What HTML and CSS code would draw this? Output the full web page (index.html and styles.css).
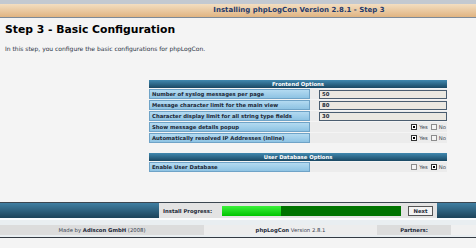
FILE: index.html
```html
<!DOCTYPE html>
<html lang="en">
<head>
    <meta charset="UTF-8">
    <meta name="viewport" content="width=device-width, initial-scale=1.0">
    <title>Installing phpLogCon - Step 3</title>
    <link rel="stylesheet" href="styles.css">
</head>
<body>
    <div class="topbar">
        <div class="topbar-title">Installing phpLogCon Version 2.8.1 - Step 3</div>
    </div>

    <div class="content">
        <h1>Step 3 - Basic Configuration</h1>
        <p class="intro">In this step, you configure the basic configurations for phpLogCon.</p>

        <table class="config">
            <colgroup>
                <col class="col-label">
                <col class="col-value">
            </colgroup>
            <tr>
                <th colspan="2">Frontend Options</th>
            </tr>
            <tr>
                <td class="label">Number of syslog messages per page</td>
                <td class="value"><input type="text" value="50"></td>
            </tr>
            <tr>
                <td class="label">Message character limit for the main view</td>
                <td class="value"><input type="text" value="80"></td>
            </tr>
            <tr>
                <td class="label">Character display limit for all string type fields</td>
                <td class="value"><input type="text" value="30"></td>
            </tr>
            <tr>
                <td class="label">Show message details popup</td>
                <td class="value">
                    <div class="choices">
                        <span class="box checked"></span><span>Yes</span>
                        <span class="box"></span><span>No</span>
                    </div>
                </td>
            </tr>
            <tr>
                <td class="label">Automatically resolved IP Addresses (inline)</td>
                <td class="value">
                    <div class="choices">
                        <span class="box checked"></span><span>Yes</span>
                        <span class="box"></span><span>No</span>
                    </div>
                </td>
            </tr>
            <tr class="spacer">
                <td colspan="2"></td>
            </tr>
            <tr>
                <th colspan="2">User Database Options</th>
            </tr>
            <tr>
                <td class="label">Enable User Database</td>
                <td class="value">
                    <div class="choices">
                        <span class="box"></span><span>Yes</span>
                        <span class="box checked"></span><span>No</span>
                    </div>
                </td>
            </tr>
        </table>
    </div>

    <div class="install-bar">
        <div class="install-panel">
            <div class="install-label">Install Progress:</div>
            <div class="track"><div class="track-done" style="width: 59px"></div></div>
            <button type="button" class="next">Next</button>
        </div>
    </div>

    <div class="footer">
        <div class="footer-row">
            <div class="footer-cell made">Made by <b>Adiscon GmbH</b> (2008)</div>
            <div class="footer-cell version"><b>phpLogCon</b> Version 2.8.1</div>
            <div class="footer-cell partners"><b>Partners:</b></div>
            <div class="footer-cell rest"></div>
        </div>
    </div>
</body>
</html>
```

FILE: styles.css
```css
body {
    margin: 0;
    background-color: #f4f4f4;
    font-family: "DejaVu Sans", Verdana, sans-serif;
    color: #1c2a38;
}

.topbar {
    height: 13px;
    border-top: 4px solid #c3c9d1;
    border-bottom: 1px solid #7d8a98;
    background: linear-gradient(#f3dec1, #e0b482);
}

.topbar-title {
    padding-left: 122px;
    text-align: center;
    font-size: 7px;
    font-weight: bold;
    line-height: 13px;
    color: #1f3a6b;
}

.content {
    padding: 5px 0 0 5px;
}

h1 {
    margin: 0;
    font-size: 10.8px;
    line-height: 13px;
    color: #000;
}

.intro {
    margin: 9px 0 0;
    font-size: 6px;
    line-height: 7px;
    color: #2a3344;
}

.config {
    margin: 27px 0 0 144px;
    width: 298px;
    table-layout: fixed;
    border-collapse: separate;
    border-spacing: 0 1px;
    font-size: 5.3px;
}

.col-label {
    width: 161px;
}

.col-value {
    width: 137px;
}

.config th {
    height: 8px;
    padding: 0;
    background: linear-gradient(#4189b0, #1a4863);
    color: #fff;
    font-weight: bold;
    line-height: 8px;
    text-align: center;
}

.config td {
    height: 10px;
    padding: 0;
    box-sizing: border-box;
}

.label {
    padding-left: 2px !important;
    border: 1px solid #6fa3c7;
    background: linear-gradient(#b3daf1, #8ec3e3);
    font-weight: bold;
    color: #1c2836;
    white-space: nowrap;
}

.value {
    padding-left: 9px !important;
    background-color: #ececec;
}

.value input {
    display: block;
    box-sizing: border-box;
    width: 128px;
    height: 9px;
    margin: 0;
    padding: 0 2px;
    border: 1px solid #4a5d70;
    background-color: #ebe8e1;
    font-family: inherit;
    font-size: 5.3px;
    font-weight: bold;
    color: #1c2836;
}

.choices {
    display: flex;
    justify-content: flex-end;
    align-items: center;
    gap: 2px;
    padding-right: 1px;
    color: #3a4450;
}

.box {
    box-sizing: border-box;
    width: 6px;
    height: 6px;
    margin-left: 1px;
    border: 1px solid #8d8d8d;
    background-color: #f4f4f4;
}

.box.checked {
    border-color: #333;
    background: radial-gradient(#000 45%, #fff 50%);
}

.spacer td {
    height: 8px;
}

.install-bar {
    display: flex;
    height: 15px;
    margin-top: 29px;
    border-top: 1px solid #3b4650;
    background: linear-gradient(#407fa2, #1d4359);
}

.install-panel {
    display: flex;
    align-items: center;
    width: 278px;
    margin-left: 159px;
    background-color: #e3e3e3;
    font-size: 5.3px;
    font-weight: bold;
    color: #1c2836;
}

.install-label {
    width: 61px;
    padding-left: 4px;
}

.track {
    width: 179px;
    height: 10px;
    margin-left: -2px;
    background-color: #007300;
}

.track-done {
    height: 100%;
    background: linear-gradient(#3cf03c, #00c400);
}

.next {
    width: 25px;
    height: 10px;
    margin-left: 7px;
    padding: 0;
    border: 1px solid #555;
    background-color: #f3f3f3;
    font-family: inherit;
    font-size: 5.3px;
    font-weight: bold;
    color: #1c2836;
}

.footer {
    padding: 5px 0 2px;
    border-top: 2px solid #fbfcfd;
    border-bottom: 1px solid #333a42;
    background-color: #e9eef1;
}

.footer-row {
    display: flex;
    height: 10px;
    font-size: 5.3px;
    line-height: 10px;
    color: #3a4452;
}

.footer-cell {
    text-align: center;
}

.footer-cell b {
    color: #1e2a3a;
}

.made {
    width: 204px;
    background-color: #dcdcdc;
}

.version {
    width: 173px;
    background-color: #ededed;
}

.partners {
    width: 74px;
    background-color: #dcdcdc;
}

.rest {
    flex: 1;
    background-color: #f0f0f0;
}
```
